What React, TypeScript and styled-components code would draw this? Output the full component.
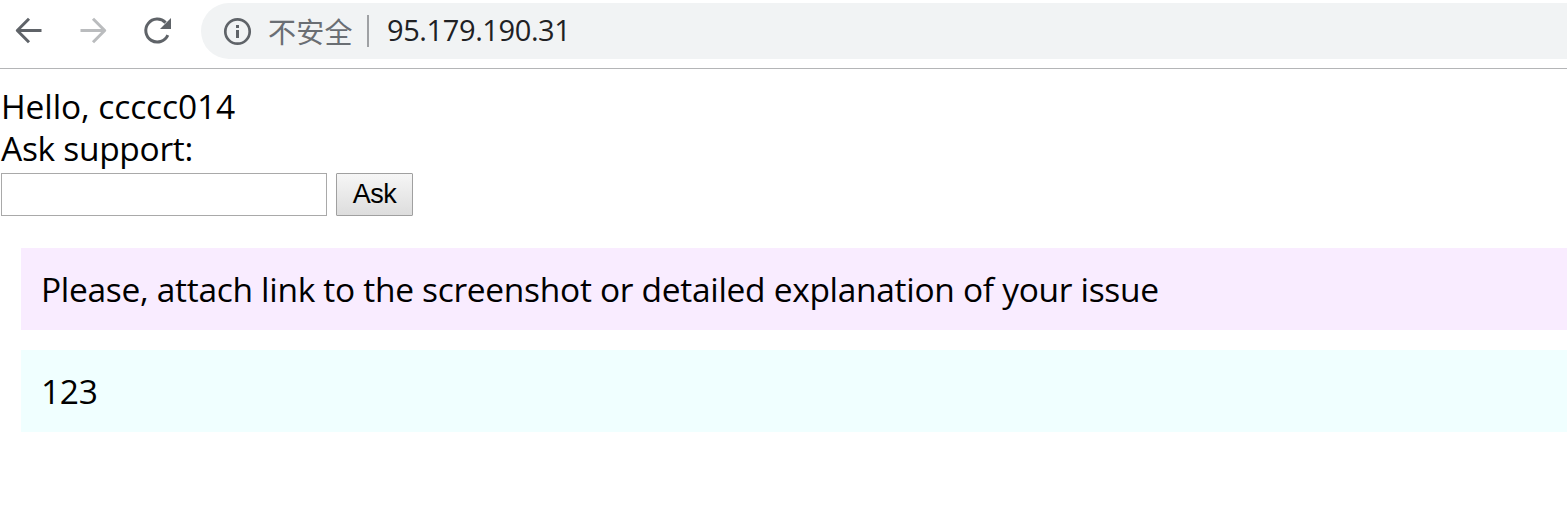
import React from "react";
import styled, { createGlobalStyle } from "styled-components";

const GlobalStyle = createGlobalStyle`
  body { margin: 0; background: #fff; overflow: hidden; }
  * { box-sizing: border-box; }
`;

const uiFont = `"Open Sans", "Noto Sans CJK SC", sans-serif`;

const Page = styled.div`
  font-family: ${uiFont};
  color: #000;
`;

const Toolbar = styled.header`
  display: flex;
  align-items: flex-start;
  height: 69px;
  padding-top: 3px;
  border-bottom: 1px solid #b4b5b7;
`;

const NavButtons = styled.nav`
  display: flex;
  width: 201px;
  padding: 8px 0 0 9px;
  gap: 24px;
`;

const NavIcon = styled.svg<{ $muted?: boolean }>`
  flex: none;
  width: 40px;
  height: 40px;
  color: ${(p) => (p.$muted ? "#babcbe" : "#5f6368")};
`;

const AddressBar = styled.div`
  flex: 1;
  display: flex;
  align-items: center;
  height: 56px;
  padding-left: 20px;
  border-radius: 28px 0 0 28px;
  background: #f1f3f4;
`;

const InfoIcon = styled.svg`
  flex: none;
  width: 32px;
  height: 32px;
  color: #5f6368;
`;

const Security = styled.span`
  width: 98px;
  margin-left: 15px;
  font-family: "Noto Sans CJK SC", sans-serif;
  font-size: 28px;
  line-height: 40px;
  letter-spacing: 0.3px;
  color: #6a6e73;
`;

const Divider = styled.span`
  width: 2px;
  height: 32px;
  margin-left: 1px;
  background: #9fa1a4;
`;

const Address = styled.span`
  margin: -2px 0 0 18px;
  font-size: 29px;
  line-height: 40px;
  letter-spacing: -0.4px;
  color: #202124;
`;

const Content = styled.main`
  padding-top: 16px;
  font-size: 33.5px;
  line-height: 42px;
`;

const Line = styled.div<{ $spacing: number }>`
  padding-left: 1px;
  white-space: nowrap;
  letter-spacing: ${(p) => p.$spacing}px;
`;

const Form = styled.form`
  display: flex;
  gap: 9px;
  margin: 4px 0 0 1px;
`;

const QuestionInput = styled.input`
  width: 326px;
  height: 43px;
  padding: 2px 4px;
  border: 1px solid #a9a9a9;
  background: #fff;
  font: 27px "Liberation Sans", sans-serif;
  outline: none;
`;

const AskButton = styled.button`
  width: 77px;
  height: 43px;
  padding: 0;
  border: 1px solid #a0a0a0;
  border-radius: 1px;
  background: linear-gradient(#f6f6f6, #dddddd);
  font: 27px "Liberation Sans", sans-serif;
  letter-spacing: -0.5px;
  color: #000;
`;

const Messages = styled.section`
  display: flex;
  flex-direction: column;
  gap: 20px;
  margin: 32px 0 0 21px;
`;

const Message = styled.div<{ $tone: string }>`
  padding: 20px;
  background: ${(p) => p.$tone};
  white-space: nowrap;
  letter-spacing: -0.3px;
`;

export default function App() {
  return (
    <Page>
      <GlobalStyle />
      <Toolbar>
        <NavButtons>
          <NavIcon viewBox="0 0 40 40" fill="none" stroke="currentColor" strokeWidth="3">
            <path d="M32.5 19.5H8.8M20 7.8 8.3 19.5 20 31.2" strokeLinejoin="round" />
          </NavIcon>
          <NavIcon $muted viewBox="0 0 40 40" fill="none" stroke="currentColor" strokeWidth="3">
            <path d="M7.5 19.5h24M20 7.8l11.7 11.7L20 31.2" strokeLinejoin="round" />
          </NavIcon>
          <NavIcon viewBox="0 0 40 40" fill="none">
            <path d="M30.8 24.2A11.5 11.5 0 1 1 28.6 11.6" stroke="currentColor" strokeWidth="3" />
            <path d="M34 7v11H23z" fill="currentColor" />
          </NavIcon>
        </NavButtons>
        <AddressBar>
          <InfoIcon viewBox="0 0 32 32">
            <circle cx="16.5" cy="16.5" r="12.2" fill="none" stroke="currentColor" strokeWidth="2.7" />
            <path d="M15 10h3v3h-3zM15 15h3v8h-3z" fill="currentColor" />
          </InfoIcon>
          <Security>不安全</Security>
          <Divider />
          <Address>95.179.190.31</Address>
        </AddressBar>
      </Toolbar>
      <Content>
        <Line $spacing={-0.1}>Hello, ccccc014</Line>
        <Line $spacing={-0.3}>Ask support:</Line>
        <Form onSubmit={(e) => e.preventDefault()}>
          <QuestionInput type="text" aria-label="Ask support" />
          <AskButton type="submit">Ask</AskButton>
        </Form>
        <Messages>
          <Message $tone="#f9ecff">
            Please, attach link to the screenshot or detailed explanation of your issue
          </Message>
          <Message $tone="#f0ffff">123</Message>
        </Messages>
      </Content>
    </Page>
  );
}
